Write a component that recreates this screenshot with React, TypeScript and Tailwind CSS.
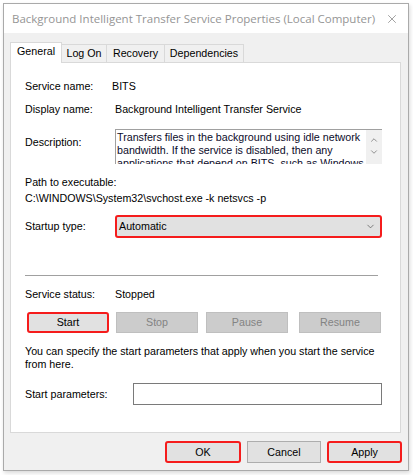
import { ChevronDown, ChevronUp, X } from "lucide-react"

const FONT = { fontFamily: '"Liberation Sans", Arial, sans-serif' }

const TABS = ["General", "Log On", "Recovery", "Dependencies"]

function Btn({
  label,
  width,
  disabled = false,
  marked = false,
  className = "",
}: {
  label: string
  width: string
  disabled?: boolean
  marked?: boolean
  className?: string
}) {
  const base = disabled
    ? "bg-[#cccccc] border border-[#bfbfbf] text-[#838383]"
    : marked
      ? "bg-[#e1e1e1] border-2 border-[#f51c1c] rounded-[3px] text-black"
      : "bg-[#e1e1e1] border border-[#adadad] text-black"
  return (
    <div className={`${width} flex items-center justify-center ${base} ${className}`}>
      {label}
    </div>
  )
}

export default function App() {
  return (
    <div className="w-[413px] h-[475px] bg-white pt-[3px] pl-[3px]" style={FONT}>
      <div className="w-[406px] h-[468px] border border-[#aaaaaa] bg-[#f0f0f0] flex flex-col shadow-[1px_2px_4px_rgba(0,0,0,0.15)]">
        {/* title bar */}
        <div className="h-[29px] bg-white flex items-center justify-between pl-[8px] pr-[9px]">
          <span
            className="text-[#959595]"
            style={{ fontFamily: '"Open Sans", "Noto Sans", sans-serif', fontSize: "11.5px" }}
          >
            Background Intelligent Transfer Service Properties (Local Computer)
          </span>
          <X className="w-[14px] h-[14px] text-[#7a7a7a]" strokeWidth={1.2} />
        </div>

        <div className="flex-1 flex flex-col px-[6px] pt-[9px] text-[10.7px] text-black">
          {/* tabs */}
          <div className="flex items-end h-[20px] relative z-10">
            {TABS.map((t, i) =>
              i === 0 ? (
                <div
                  key={t}
                  className="h-[21px] w-[52px] bg-white border border-[#d9d9d9] border-b-0 flex items-center justify-center pb-[3px] -mb-[1px]"
                >
                  {t}
                </div>
              ) : (
                <div
                  key={t}
                  className={`h-[18px] bg-[#f0f0f0] border border-[#d9d9d9] border-b-0 border-l-0 flex items-center justify-center ${
                    i === 1 ? "w-[45px]" : i === 2 ? "w-[58px]" : "w-[79px]"
                  }`}
                >
                  {t}
                </div>
              ),
            )}
          </div>

          {/* panel */}
          <div className="w-[391px] h-[371px] bg-white border border-[#d9d9d9] flex flex-col pl-[14px] pr-[17px] pt-[16px] leading-[15px]">
            <div className="flex">
              <span className="w-[87px]">Service name:</span>
              <span>BITS</span>
            </div>
            <div className="flex mt-[8px]">
              <span className="w-[90px]">Display name:</span>
              <span>Background Intelligent Transfer Service</span>
            </div>
            <div className="flex items-start mt-[12px]">
              <span className="w-[90px] mt-[6px]">Description:</span>
              <div className="w-[267px] h-[35px] border-t border-l border-[#a0a0a0] flex overflow-hidden">
                <div className="flex-1 pl-[1px] pt-[1px] text-[#0b0b2a] leading-[13px]">
                  Transfers files in the background using idle network bandwidth. If the service is disabled, then any
                  applications that depend on BITS, such as Windows
                </div>
                <div className="w-[16px] bg-[#f0f0f0] flex flex-col items-center pt-[5px] gap-[2px] text-[#606060]">
                  <ChevronUp className="w-[10px] h-[10px]" strokeWidth={1.6} />
                  <ChevronDown className="w-[10px] h-[10px]" strokeWidth={1.6} />
                </div>
              </div>
            </div>
            <div className="mt-[11px]">Path to executable:</div>
            <div className="mt-[1px]">C:\WINDOWS\System32\svchost.exe -k netsvcs -p</div>
            <div className="flex items-center mt-[9px]">
              <span className="w-[90px]">Startup type:</span>
              <div className="w-[267px] h-[23px] bg-[#e1e1e1] border-2 border-[#f51c1c] rounded-[3px] flex items-center justify-between pl-[2px] pr-[4px]">
                <span>Automatic</span>
                <ChevronDown className="w-[11px] h-[11px] text-[#505050]" strokeWidth={1.5} />
              </div>
            </div>
            <div className="mt-[37px] h-px w-[353px] bg-[#a0a0a0]" />
            <div className="flex mt-[11px]">
              <span className="w-[90px]">Service status:</span>
              <span>Stopped</span>
            </div>
            <div className="flex mt-[10px] h-[21px]">
              <Btn label="Start" width="w-[82px]" marked className="ml-[2px]" />
              <Btn label="Stop" width="w-[82px]" disabled className="ml-[7px]" />
              <Btn label="Pause" width="w-[82px]" disabled className="ml-[8px]" />
              <Btn label="Resume" width="w-[82px]" disabled className="ml-[11px]" />
            </div>
            <div className="mt-[12px] leading-[13px]">
              You can specify the start parameters that apply when you start the service from here.
            </div>
            <div className="flex items-center mt-[12px]">
              <span className="w-[108px]">Start parameters:</span>
              <div className="w-[249px] h-[22px] border border-[#7a7a7a] bg-white" />
            </div>
          </div>

          {/* dialog buttons */}
          <div className="flex justify-end mt-[8px] h-[22px] gap-[6px]">
            <Btn label="OK" width="w-[76px]" marked />
            <Btn label="Cancel" width="w-[74px]" />
            <Btn label="Apply" width="w-[75px]" marked />
          </div>
        </div>
      </div>
    </div>
  )
}
